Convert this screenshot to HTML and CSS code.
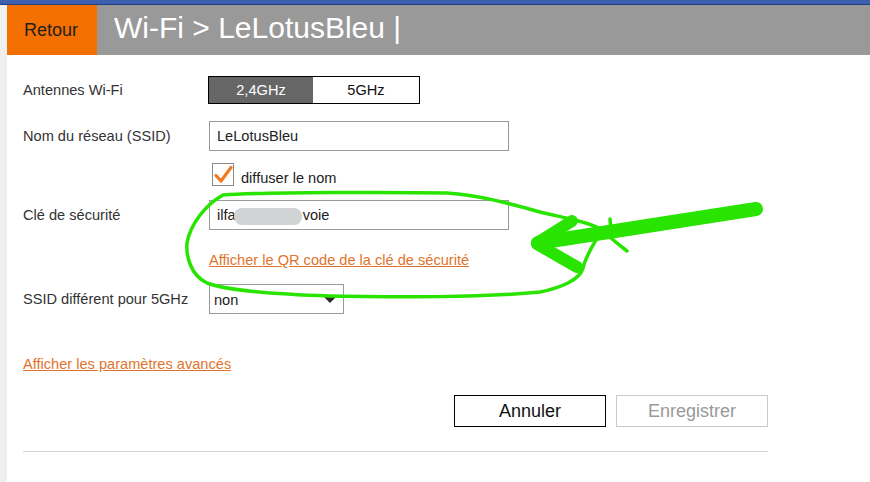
FILE: index.html
```html
<!DOCTYPE html>
<html lang="fr">
<head>
<meta charset="utf-8">
<title>Wi-Fi</title>
<link rel="stylesheet" href="styles.css">
</head>
<body>
<div class="topbar"></div>
<div class="page">
  <div class="strip"></div>
  <div class="main">
    <header class="head">
      <a class="back">Retour</a>
      <h1 class="title">Wi-Fi &gt; LeLotusBleu |</h1>
    </header>
    <div class="content">
      <div class="row row-ant">
        <div class="label">Antennes Wi-Fi</div>
        <div class="seg">
          <span class="seg-item seg-on">2,4GHz</span>
          <span class="seg-item">5GHz</span>
        </div>
      </div>
      <div class="row row-ssid">
        <div class="label">Nom du réseau (SSID)</div>
        <div class="input">LeLotusBleu</div>
      </div>
      <div class="row row-check">
        <div class="label"></div>
        <span class="checkbox">
          <svg width="20" height="20" viewBox="0 0 20 20"><path d="M3 10.5 L8 16 L18 2.5" fill="none" stroke="#ee7a22" stroke-width="3.2" stroke-linecap="round" stroke-linejoin="round"/></svg>
        </span>
        <span class="check-text">diffuser le nom</span>
      </div>
      <div class="row row-key">
        <div class="label">Clé de sécurité</div>
        <div class="input"><span>ilfa</span><span class="blur"></span><span>voie</span></div>
      </div>
      <div class="row row-qr">
        <div class="label"></div>
        <a class="link">Afficher le QR code de la clé de sécurité</a>
      </div>
      <div class="row row-5g">
        <div class="label">SSID différent pour 5GHz</div>
        <div class="select"><span>non</span><span class="caret"></span></div>
      </div>
      <a class="link adv">Afficher les paramètres avancés</a>
      <div class="actions">
        <button class="btn btn-cancel">Annuler</button>
        <button class="btn btn-save">Enregistrer</button>
      </div>
      <div class="sep"></div>
    </div>
  </div>
</div>
<svg class="annot" width="870" height="482" viewBox="0 0 870 482">
  <g fill="none" stroke="#28e400" stroke-linecap="round" stroke-linejoin="round">
    <path stroke-width="3.5" d="M223 195 C260 192 400 192 447 193 C480 195 515 205 540 212 C560 217 590 222 602 230 C596 240 586 255 583 268 C580 280 560 288 540 292 C480 298 400 297 330 296 C270 294 225 290 207 283 C190 275 186 255 187 243 C190 225 205 205 223 195"/>
    <path stroke-width="3.5" d="M602 230 Q615 242 627 251"/>
    <path stroke-width="3.5" d="M610 219 L611 232"/>
    <path stroke-width="14" d="M756 209 L538 243"/>
    <path stroke-width="12" d="M537 243 L572 221"/>
    <path stroke-width="12" d="M537 244 L577 267"/>
  </g>
</svg>
</body>
</html>
```
FILE: styles.css
```css
* { box-sizing: border-box; }
html, body { margin: 0; padding: 0; }
body {
  font-family: "Liberation Sans", Arial, sans-serif;
  background: #fff;
  color: #333;
  width: 870px;
  height: 482px;
  overflow: hidden;
  position: relative;
}
.topbar {
  height: 5px;
  background: #3d5fae;
  border-bottom: 1px solid #223f7f;
}
.page {
  display: flex;
  height: 477px;
}
.strip {
  width: 7px;
  background: #efefef;
  flex: none;
}
.main {
  flex: 1;
  display: flex;
  flex-direction: column;
}
.head {
  height: 50px;
  background: #999;
  display: flex;
  align-items: center;
}
.back {
  width: 90px;
  height: 100%;
  background: #f26f00;
  color: #1f1f1f;
  font-size: 18px;
  display: flex;
  align-items: center;
  justify-content: center;
  padding-right: 2px;
}
.title {
  margin: 0 0 0 17px;
  font-weight: normal;
  font-size: 30px;
  color: #fff;
  padding-bottom: 4px;
}
.content {
  padding-left: 16px;
  width: 761px;
  font-size: 14.6px;
}
.row {
  display: flex;
  align-items: center;
}
.label {
  width: 186px;
  flex: none;
  color: #333;
}
.row-ant { margin-top: 21px; }
.row-ssid { margin-top: 17px; }
.row-check { margin-top: 12px; align-items: flex-end; }
.row-key { margin-top: 14px; }
.row-qr { margin-top: 22px; }
.row-5g { margin-top: 16px; }
.seg {
  display: flex;
  margin-left: -1px;
  border: 1px solid #000;
  height: 28px;
}
.seg-item {
  width: 106px;
  display: flex;
  align-items: center;
  justify-content: center;
  color: #111;
}
.seg-on {
  width: 104px;
  background: #666;
  color: #fff;
}
.input {
  width: 300px;
  height: 30px;
  border: 1px solid #999;
  padding-left: 7px;
  display: flex;
  align-items: center;
  color: #222;
}
.blur {
  width: 68px;
  height: 17px;
  border-radius: 8px;
  background: #d2d3d5;
  margin: 2px 1px 0 -2px;
}
.checkbox {
  width: 22px;
  height: 23px;
  border: 1px solid #8a8a8a;
  margin-left: 3px;
  display: flex;
  align-items: center;
  justify-content: center;
}
.check-text {
  margin-left: 7px;
  line-height: 16px;
  color: #222;
}
.link {
  color: #e0742c;
  text-decoration: underline;
  line-height: 16px;
}
.select {
  width: 135px;
  height: 30px;
  border: 1px solid #999;
  padding: 2px 7px 0 4px;
  display: flex;
  align-items: center;
  justify-content: space-between;
  color: #222;
}
.caret {
  width: 0;
  height: 0;
  border-left: 6px solid transparent;
  border-right: 6px solid transparent;
  border-top: 6px solid #2a2a2a;
  margin-top: -1px;
}
.adv {
  display: block;
  margin-top: 42px;
  width: max-content;
}
.actions {
  display: flex;
  justify-content: flex-end;
  gap: 10px;
  margin-top: 23px;
  width: 745px;
}
.btn {
  width: 152px;
  height: 32px;
  background: #fff;
  font-family: inherit;
  font-size: 18px;
  padding: 0;
}
.btn-cancel {
  border: 1px solid #000;
  color: #111;
}
.btn-save {
  border: 1px solid #c9c9c9;
  color: #999;
}
.sep {
  margin-top: 24px;
  width: 745px;
  height: 1px;
  background: #d2d2d2;
}
.annot {
  position: absolute;
  left: 0;
  top: 0;
  pointer-events: none;
}
```
